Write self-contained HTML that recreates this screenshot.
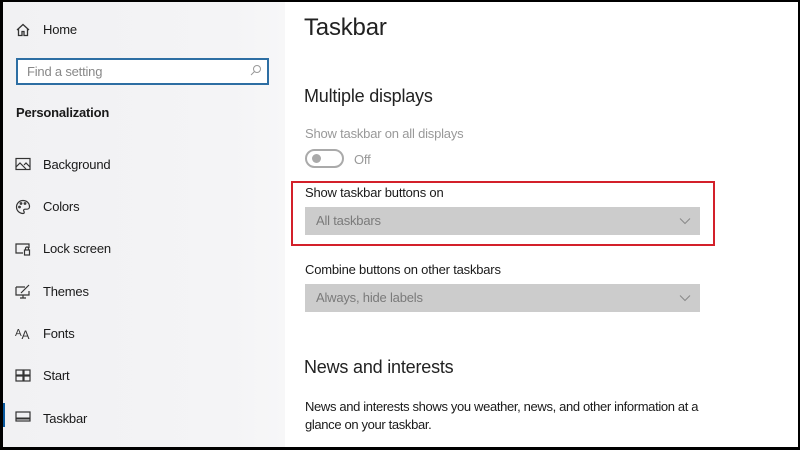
<!DOCTYPE html>
<html><head><style>
*{margin:0;padding:0;box-sizing:border-box}
body{width:800px;height:450px;background:#000;font-family:"Liberation Sans",sans-serif;position:relative;overflow:hidden}
#side{position:absolute;left:3px;top:2px;width:282px;height:445px;background:linear-gradient(90deg,#f1f1f3,#f4f4f6 80%,#f7f7f8)}
#main{position:absolute;left:285px;top:2px;width:513px;height:445px;background:#fff}
.t{position:absolute;white-space:nowrap;color:#1a1a1a;letter-spacing:-0.2px}
.ic{position:absolute}
.dd{position:absolute;left:305px;width:395px;height:28px;background:#cccccc;color:#7a7a7a;font-size:13px;line-height:28px;padding-left:11px;letter-spacing:-0.2px}
.dd svg{position:absolute;right:9px;top:10px}
</style></head><body>
<div id="side"></div>
<div id="main"></div>
<svg class="ic" style="left:15px;top:22px" width="16" height="16" viewBox="0 0 16 16" fill="none" stroke="#333" stroke-width="1.3"><path d="M2 8L8 2.5 14 8M3.5 7v6.5h3.5v-4h2v4h3.5V7"/></svg>
<div class="t" style="left:43px;top:22px;font-size:13px">Home</div>
<div style="position:absolute;left:16px;top:58px;width:253px;height:27px;border:2px solid #2d6ea3;background:#fff"></div>
<div class="t" style="left:27px;top:64px;font-size:13px;color:#888">Find a setting</div>
<svg class="ic" style="left:250px;top:64px" width="12" height="12" viewBox="0 0 12 12" fill="none" stroke="#999" stroke-width="1"><circle cx="7" cy="5" r="3.5"/><path d="M4.5 7.5L1 11"/></svg>
<div class="t" style="left:16px;top:105px;font-size:13px;font-weight:bold">Personalization</div>
<svg class="ic" style="left:15px;top:157px" width="16" height="14" viewBox="0 0 16 14" fill="none" stroke="#333" stroke-width="1.2"><rect x="1" y="1.5" width="14" height="11"/><path d="M1 10l4-4 6 6M9 8l2-2 4 4"/></svg>
<div class="t" style="left:43px;top:157px;font-size:13px">Background</div>
<svg class="ic" style="left:15px;top:199px" width="16" height="16" viewBox="0 0 16 16" fill="none" stroke="#333" stroke-width="1.2"><path d="M8 1.5a6.5 6.5 0 1 0 0 13c1.5 0 1.5-1.5 .8-2.3-.7-.8 0-2 1.2-2h2a2.5 2.5 0 0 0 2.5-2.5C14.5 4 11.5 1.5 8 1.5z"/><circle cx="4.5" cy="8" r=".8"/><circle cx="6" cy="4.5" r=".8"/><circle cx="10" cy="4.5" r=".8"/></svg>
<div class="t" style="left:43px;top:199px;font-size:13px">Colors</div>
<svg class="ic" style="left:15px;top:242px" width="16" height="14" viewBox="0 0 16 14" fill="none" stroke="#333" stroke-width="1.2"><path d="M8 11H1V2h13v4"/><rect x="9.5" y="8" width="5" height="5"/><path d="M10.5 8V6.5a1.5 1.5 0 0 1 3 0V8"/></svg>
<div class="t" style="left:43px;top:241px;font-size:13px">Lock screen</div>
<svg class="ic" style="left:15px;top:284px" width="16" height="15" viewBox="0 0 16 15" fill="none" stroke="#333" stroke-width="1.2"><path d="M1 3h9M1 3v8h13V7M5 14h6M8 11v3M6 9l8-8"/></svg>
<div class="t" style="left:43px;top:284px;font-size:13px">Themes</div>
<div class="t" style="left:15px;top:325px;font-size:10px;color:#333">A<span style="font-size:12px;position:relative;top:3px">A</span></div>
<div class="t" style="left:43px;top:326px;font-size:13px">Fonts</div>
<svg class="ic" style="left:15px;top:369px" width="16" height="13" viewBox="0 0 16 13" fill="none" stroke="#333" stroke-width="1.2"><rect x="1" y="1" width="7" height="5"/><rect x="9" y="1" width="6" height="5"/><rect x="1" y="7" width="7" height="5"/><rect x="9" y="7" width="6" height="5"/></svg>
<div class="t" style="left:43px;top:368px;font-size:13px">Start</div>
<div style="position:absolute;left:3px;top:403px;width:2px;height:24px;background:#0a5aa0"></div>
<svg class="ic" style="left:15px;top:411px" width="16" height="11" viewBox="0 0 16 11" fill="none" stroke="#333" stroke-width="1.2"><rect x="1" y="1" width="14" height="9"/><path d="M1 7.5h14" stroke-width="2"/></svg>
<div class="t" style="left:43px;top:411px;font-size:13px">Taskbar</div>

<div class="t" style="left:304px;top:14px;font-size:24px;color:#222">Taskbar</div>
<div class="t" style="left:304px;top:86px;font-size:18px;color:#222">Multiple displays</div>
<div class="t" style="left:305px;top:126px;font-size:13px;color:#999">Show taskbar on all displays</div>
<div style="position:absolute;left:305px;top:149px;width:39px;height:19px;border:2px solid #aaa;border-radius:10px"></div>
<div style="position:absolute;left:312px;top:154px;width:9px;height:9px;border-radius:50%;background:#aaa"></div>
<div class="t" style="left:354px;top:152px;font-size:13px;color:#999">Off</div>
<div style="position:absolute;left:291px;top:181px;width:424px;height:65px;border:2px solid #d3202a"></div>
<div class="t" style="left:305px;top:185px;font-size:13px">Show taskbar buttons on</div>
<div class="dd" style="top:207px">All taskbars<svg width="12" height="8" viewBox="0 0 12 8" fill="none" stroke="#888"><path d="M1 1.5l5 5 5-5"/></svg></div>
<div class="t" style="left:305px;top:262px;font-size:13px">Combine buttons on other taskbars</div>
<div class="dd" style="top:284px">Always, hide labels<svg width="12" height="8" viewBox="0 0 12 8" fill="none" stroke="#888"><path d="M1 1.5l5 5 5-5"/></svg></div>
<div class="t" style="left:304px;top:357px;font-size:18px;color:#222">News and interests</div>
<div class="t" style="left:305px;top:398px;font-size:13px;line-height:18px;letter-spacing:-0.35px">News and interests shows you weather, news, and other information at a<br>glance on your taskbar.</div>
</body></html>
